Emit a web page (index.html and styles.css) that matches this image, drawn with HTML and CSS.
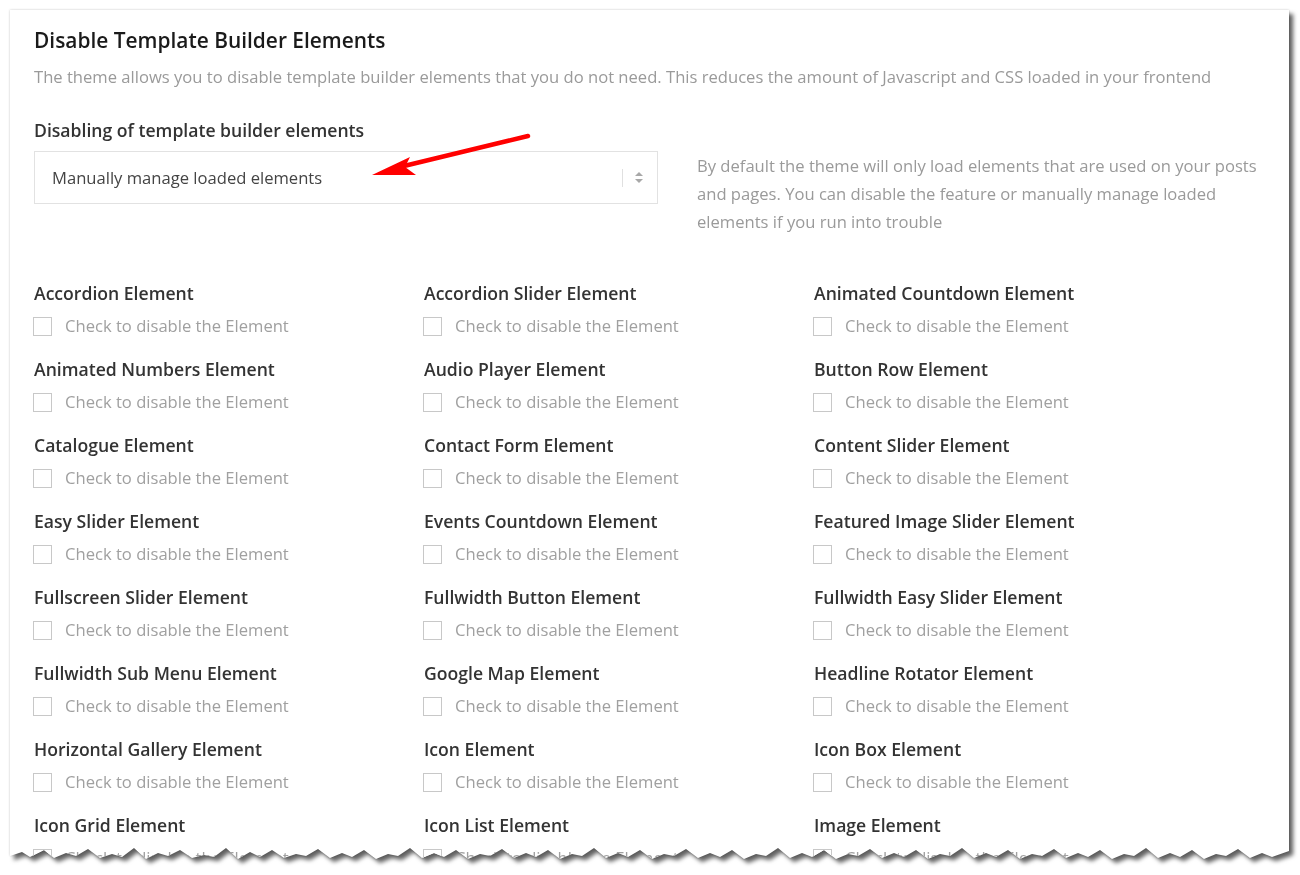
FILE: index.html
```html
<!DOCTYPE html>
<html lang="en">
<head>
<meta charset="utf-8">
<title>Disable Template Builder Elements</title>
<link rel="stylesheet" href="styles.css">
</head>
<body>
<div class="shot">
  <div class="card">
    <h1 class="title">Disable Template Builder Elements</h1>
    <p class="intro">The theme allows you to disable template builder elements that you do not need. This reduces the amount of Javascript and CSS loaded in your frontend</p>

    <div class="form-row">
      <div class="field-label">Disabling of template builder elements</div>
      <div class="select">
        <span class="select-text">Manually manage loaded elements</span>
        <span class="select-sep"></span>
        <span class="select-arrows"><span class="up"></span><span class="down"></span></span>
      </div>
      <p class="field-desc">By default the theme will only load elements that are used on your posts and pages. You can disable the feature or manually manage loaded elements if you run into trouble</p>
    </div>

    <div class="grid">
      <div class="item"><div class="item-title">Accordion Element</div><label class="check"><span class="box"></span>Check to disable the Element</label></div>
      <div class="item"><div class="item-title">Accordion Slider Element</div><label class="check"><span class="box"></span>Check to disable the Element</label></div>
      <div class="item"><div class="item-title">Animated Countdown Element</div><label class="check"><span class="box"></span>Check to disable the Element</label></div>
      <div class="item"><div class="item-title">Animated Numbers Element</div><label class="check"><span class="box"></span>Check to disable the Element</label></div>
      <div class="item"><div class="item-title">Audio Player Element</div><label class="check"><span class="box"></span>Check to disable the Element</label></div>
      <div class="item"><div class="item-title">Button Row Element</div><label class="check"><span class="box"></span>Check to disable the Element</label></div>
      <div class="item"><div class="item-title">Catalogue Element</div><label class="check"><span class="box"></span>Check to disable the Element</label></div>
      <div class="item"><div class="item-title">Contact Form Element</div><label class="check"><span class="box"></span>Check to disable the Element</label></div>
      <div class="item"><div class="item-title">Content Slider Element</div><label class="check"><span class="box"></span>Check to disable the Element</label></div>
      <div class="item"><div class="item-title">Easy Slider Element</div><label class="check"><span class="box"></span>Check to disable the Element</label></div>
      <div class="item"><div class="item-title">Events Countdown Element</div><label class="check"><span class="box"></span>Check to disable the Element</label></div>
      <div class="item"><div class="item-title">Featured Image Slider Element</div><label class="check"><span class="box"></span>Check to disable the Element</label></div>
      <div class="item"><div class="item-title">Fullscreen Slider Element</div><label class="check"><span class="box"></span>Check to disable the Element</label></div>
      <div class="item"><div class="item-title">Fullwidth Button Element</div><label class="check"><span class="box"></span>Check to disable the Element</label></div>
      <div class="item"><div class="item-title">Fullwidth Easy Slider Element</div><label class="check"><span class="box"></span>Check to disable the Element</label></div>
      <div class="item"><div class="item-title">Fullwidth Sub Menu Element</div><label class="check"><span class="box"></span>Check to disable the Element</label></div>
      <div class="item"><div class="item-title">Google Map Element</div><label class="check"><span class="box"></span>Check to disable the Element</label></div>
      <div class="item"><div class="item-title">Headline Rotator Element</div><label class="check"><span class="box"></span>Check to disable the Element</label></div>
      <div class="item"><div class="item-title">Horizontal Gallery Element</div><label class="check"><span class="box"></span>Check to disable the Element</label></div>
      <div class="item"><div class="item-title">Icon Element</div><label class="check"><span class="box"></span>Check to disable the Element</label></div>
      <div class="item"><div class="item-title">Icon Box Element</div><label class="check"><span class="box"></span>Check to disable the Element</label></div>
      <div class="item"><div class="item-title">Icon Grid Element</div><label class="check"><span class="box"></span>Check to disable the Element</label></div>
      <div class="item"><div class="item-title">Icon List Element</div><label class="check"><span class="box"></span>Check to disable the Element</label></div>
      <div class="item"><div class="item-title">Image Element</div><label class="check"><span class="box"></span>Check to disable the Element</label></div>
    </div>

    <svg class="annot-arrow" width="180" height="60" viewBox="0 0 180 60" aria-hidden="true">
      <path d="M168 12 L44 42" stroke="#ff0000" stroke-width="4.5" stroke-linecap="round" fill="none"/>
      <path d="M12 51 L50 33 L45 43 L56 51 Z" fill="#ff0000"/>
    </svg>
  </div>
</div>
</body>
</html>
```

FILE: styles.css
```css
html, body {
  margin: 0;
  padding: 0;
  background: #ffffff;
}

body {
  font-family: "Open Sans", "Noto Sans", sans-serif;
  color: #333;
}

.shot {
  padding: 10px 0 0 10px;
  width: 1279px;
  filter: drop-shadow(0 0 1px rgba(0, 0, 0, 0.22)) drop-shadow(4px 4px 2px rgba(0, 0, 0, 0.62));
}

.card {
  position: relative;
  background: #fff;
  height: 860px;
  box-sizing: border-box;
  padding: 16px 24px 0 24px;
  overflow: hidden;
  clip-path: polygon(0 0, 1279px 0, 1279px 841px,
    1262px 847px, 1252px 843px, 1240px 848px, 1228px 839px, 1216px 846px, 1206px 844px, 1194px 849px, 1182px 840px, 1170px 847px, 1160px 843px, 1148px 848px, 1136px 838px, 1124px 846px, 1114px 844px, 1102px 849px, 1090px 840px, 1078px 847px, 1068px 843px, 1056px 848px, 1044px 839px, 1032px 846px, 1022px 844px, 1010px 849px, 998px 840px, 986px 847px, 976px 843px, 964px 848px, 952px 838px, 940px 846px, 930px 844px, 918px 849px, 906px 840px, 894px 847px, 884px 843px, 872px 848px, 860px 839px, 848px 846px, 838px 844px, 826px 849px, 814px 840px, 802px 847px, 792px 843px, 780px 848px, 768px 838px, 756px 846px, 746px 844px, 734px 849px, 722px 840px, 710px 847px, 700px 843px, 688px 848px, 676px 839px, 664px 846px, 654px 844px, 642px 849px, 630px 840px, 618px 847px, 608px 843px, 596px 848px, 584px 838px, 572px 846px, 562px 844px, 550px 849px, 538px 840px, 526px 847px, 516px 843px, 504px 848px, 492px 839px, 480px 846px, 470px 844px, 458px 849px, 446px 840px, 434px 847px, 424px 843px, 412px 848px, 400px 838px, 388px 846px, 378px 844px, 366px 849px, 354px 840px, 342px 847px, 332px 843px, 320px 848px, 308px 839px, 296px 846px, 286px 844px, 274px 848px, 262px 840px, 250px 847px, 240px 842px, 228px 849px, 216px 838px, 204px 847px, 194px 845px, 182px 848px, 170px 840px, 158px 846px, 148px 843px, 136px 849px, 124px 838px, 112px 847px, 102px 844px, 90px 848px, 78px 839px, 66px 846px, 56px 843px, 44px 848px, 34px 840px, 20px 847px, 12px 842px, 0 846px);
}

.title {
  margin: 0 0 9px 0;
  font-size: 20.9px;
  line-height: 28px;
  font-weight: 600;
  color: #1a1a1a;
}

.intro {
  margin: 0;
  font-size: 16.6px;
  line-height: 28px;
  color: #9a9a9a;
}

.form-row {
  margin-top: 27px;
  display: grid;
  grid-template-columns: 624px 1fr;
  column-gap: 39px;
  align-items: start;
}

.field-label {
  grid-column: 1 / 3;
  font-size: 17.6px;
  line-height: 24px;
  font-weight: 600;
  color: #333;
  margin-bottom: 9px;
}

.select {
  height: 53px;
  box-sizing: border-box;
  border: 1px solid #e2e2e2;
  display: flex;
  align-items: center;
  padding: 0 14px 0 17px;
}

.select-text {
  flex: 1;
  font-size: 16.6px;
  color: #444;
}

.select-sep {
  width: 1px;
  height: 18px;
  background: #e0e0e0;
  margin-right: 12px;
}

.select-arrows {
  display: flex;
  flex-direction: column;
  gap: 3px;
}

.select-arrows .up,
.select-arrows .down {
  width: 0;
  height: 0;
  border-left: 4px solid transparent;
  border-right: 4px solid transparent;
}

.select-arrows .up {
  border-bottom: 4px solid #a8a8a8;
}

.select-arrows .down {
  border-top: 4px solid #a8a8a8;
}

.field-desc {
  margin: 1px 0 0 0;
  font-size: 16.6px;
  line-height: 28px;
  color: #9a9a9a;
}

.grid {
  margin-top: 45px;
  display: grid;
  grid-template-columns: repeat(3, 390px);
  row-gap: 19px;
}

.item-title {
  font-size: 17.6px;
  line-height: 24px;
  font-weight: 600;
  color: #333;
  margin-bottom: 9px;
}

.check {
  display: flex;
  align-items: center;
  font-size: 16.6px;
  line-height: 24px;
  color: #a0a0a0;
}

.box {
  width: 19px;
  height: 19px;
  box-sizing: border-box;
  border: 1px solid #c8c8c8;
  margin-left: -1px;
  margin-right: 13px;
  background: #fff;
}

.annot-arrow {
  position: absolute;
  left: 350px;
  top: 114px;
}
```
